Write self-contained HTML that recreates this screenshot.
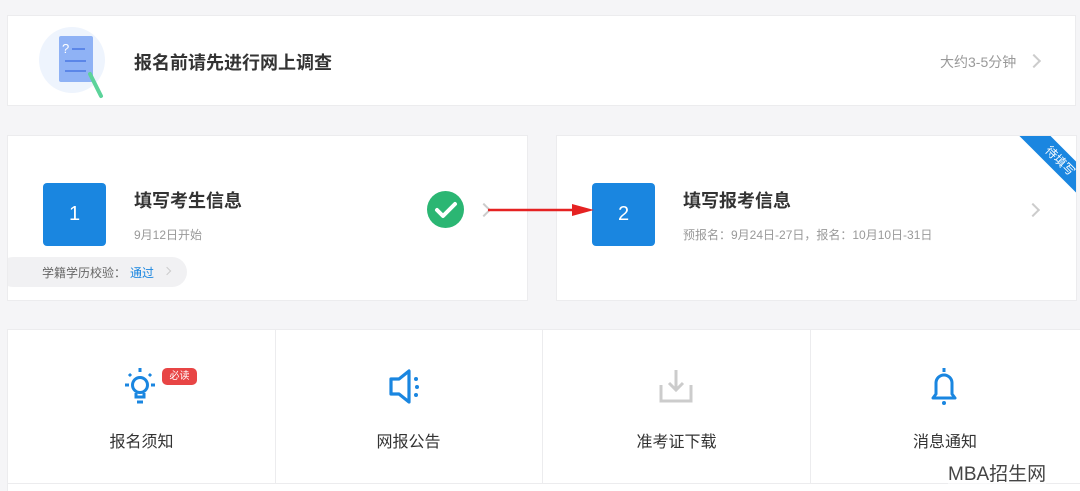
<!DOCTYPE html>
<html><head><meta charset="utf-8"><style>
*{margin:0;padding:0;box-sizing:border-box}
html,body{width:1080px;height:491px;overflow:hidden}
body{background:#f5f5f7;font-family:"Liberation Sans","Noto Sans CJK SC",sans-serif;position:relative;color:#333}
.card{position:absolute;background:#fff;border:1px solid #ececee}
.abs{position:absolute}
.title{font-size:18px;font-weight:bold;color:#333;white-space:nowrap}
.sub{font-size:12px;color:#999;white-space:nowrap}
.num{position:absolute;width:63px;height:63px;background:#1a86e0;border-radius:4px;color:#fff;font-size:20px;text-align:center;line-height:63px}
.chev{position:absolute;width:10px;height:10px;border-top:2px solid #ccc;border-right:2px solid #ccc;transform:rotate(45deg)}
.cell{position:absolute;top:0;height:154px;width:268px;border-right:1px solid #ececee}
.lbl{position:absolute;top:98px;width:100%;text-align:center;font-size:16px;color:#333}
</style></head><body>
<div class="card" style="left:7px;top:15px;width:1069px;height:91px">
  <div class="abs" style="left:31px;top:11px;width:66px;height:66px;border-radius:50%;background:#eef4fd"></div>
  <svg class="abs" style="left:45px;top:18px" width="55" height="70" viewBox="0 0 55 70">
    <rect x="6" y="2" width="34" height="46" rx="2" fill="#8fb2f5"/>
    <text x="9" y="19" font-size="13" fill="#fff" font-family="Liberation Sans">?</text>
    <line x1="19" y1="15" x2="32" y2="15" stroke="#5b86e8" stroke-width="2"/>
    <line x1="12" y1="27" x2="33" y2="27" stroke="#5b86e8" stroke-width="2"/>
    <line x1="12" y1="37" x2="33" y2="37" stroke="#5b86e8" stroke-width="2"/>
    <line x1="37" y1="40" x2="48" y2="62" stroke="#5cd39a" stroke-width="4" stroke-linecap="round"/>
  </svg>
  <div class="title abs" style="left:126px;top:33px">报名前请先进行网上调查</div>
  <div class="abs" style="left:932px;top:36px;font-size:14px;color:#999">大约3-5分钟</div>
  <div class="chev" style="left:1021px;top:40px"></div>
</div>

<div class="card" style="left:7px;top:135px;width:521px;height:166px;overflow:hidden">
  <div class="num" style="left:35px;top:47px">1</div>
  <div class="title abs" style="left:126px;top:51px">填写考生信息</div>
  <div class="sub abs" style="left:126px;top:90px">9月12日开始</div>
  <div class="abs" style="left:-10px;top:121px;width:189px;height:30px;background:#f1f1f3;border-radius:15px"></div>
  <div class="abs" style="left:34px;top:128px;font-size:12px;color:#666">学籍学历校验：<span style="color:#1a86e0;margin-left:4px">通过</span></div>
  <div class="chev" style="left:156px;top:132px;width:6px;height:6px;border-width:1px"></div>
  <div class="abs" style="left:419px;top:55px;width:37px;height:37px;border-radius:50%;background:#2bb673"></div>
  <svg class="abs" style="left:419px;top:55px" width="37" height="37"><path d="M10 19 L16 25 L28 13" stroke="#fff" stroke-width="4" fill="none" stroke-linecap="round" stroke-linejoin="round"/></svg>
  <div class="chev" style="left:471px;top:69px"></div>
</div>

<div class="card" style="left:556px;top:135px;width:521px;height:166px;overflow:hidden">
  <div class="num" style="left:35px;top:47px">2</div>
  <div class="title abs" style="left:126px;top:51px">填写报考信息</div>
  <div class="sub abs" style="left:126px;top:90px">预报名：9月24日-27日，报名：10月10日-31日</div>
  <div class="chev" style="left:471px;top:69px"></div>
  <div class="abs" style="left:448px;top:14px;width:110px;height:22px;background:#1a86e0;transform:rotate(45deg);color:#fff;font-size:12px;text-align:center;line-height:22px">待填写</div>
</div>

<svg class="abs" style="left:488px;top:200px;z-index:5" width="110" height="20"><line x1="0" y1="10" x2="90" y2="10" stroke="#e52222" stroke-width="2.5"/><polygon points="84,4 106,10 84,16" fill="#e52222"/></svg>

<div class="card" style="left:7px;top:329px;width:1073px;height:170px;border-right:none">
  <div class="cell" style="left:0">
    <svg class="abs" style="left:112px;top:36px" width="40" height="42" viewBox="0 0 40 42">
      <g fill="none" stroke="#1a86e0" stroke-width="3">
        <circle cx="20" cy="19" r="7.5"/>
        <path d="M16 27 v4 h8 v-4"/><line x1="17" y1="36" x2="23" y2="36"/>
        <line x1="20" y1="2" x2="20" y2="6"/><line x1="5" y1="19" x2="9" y2="19"/><line x1="31" y1="19" x2="35" y2="19"/>
        <line x1="9" y1="8" x2="11" y2="10"/><line x1="31" y1="8" x2="29" y2="10"/>
      </g></svg>
    <div class="abs" style="left:154px;top:38px;width:35px;height:17px;background:#e84545;border-radius:5px;color:#fff;font-size:10px;text-align:center;line-height:17px">必读</div>
    <div class="lbl">报名须知</div>
  </div>
  <div class="cell" style="left:267px">
    <svg class="abs" style="left:113px;top:38px" width="40" height="40" viewBox="0 0 40 40">
      <path d="M3 11 h8 l10 -8 v31 l-10 -8 h-8 z" fill="none" stroke="#1a86e0" stroke-width="3.2" stroke-linejoin="round"/>
      <circle cx="28" cy="11" r="2" fill="#1a86e0"/><circle cx="29" cy="19" r="2" fill="#1a86e0"/><circle cx="28" cy="27" r="2" fill="#1a86e0"/>
    </svg>
    <div class="lbl">网报公告</div>
  </div>
  <div class="cell" style="left:535px">
    <svg class="abs" style="left:115px;top:38px" width="40" height="40" viewBox="0 0 40 40">
      <g fill="none" stroke="#ccc" stroke-width="3"><line x1="18" y1="2" x2="18" y2="21"/><path d="M11 15 l7 7 l7 -7"/><path d="M3 17 v16 h30 v-16"/></g>
    </svg>
    <div class="lbl">准考证下载</div>
  </div>
  <div class="cell" style="left:803px;border-right:none">
    <svg class="abs" style="left:115px;top:36px" width="40" height="42" viewBox="0 0 40 42">
      <g fill="none" stroke="#1a86e0" stroke-width="3"><line x1="18" y1="2" x2="18" y2="6"/><path d="M10 28 v-11 a8 8 0 0 1 16 0 v11 l3 4 h-22 z" stroke-linejoin="round"/></g>
      <circle cx="18" cy="37" r="2" fill="#1a86e0"/>
    </svg>
    <div class="lbl">消息通知</div>
  </div>
  <div class="abs" style="left:0;top:153px;width:1073px;height:1px;background:#ececee"></div>
</div>
<div class="abs" style="left:948px;top:459px;font-size:19px;color:#444;background:rgba(255,255,255,.6);z-index:6">MBA招生网</div>
</body></html>
